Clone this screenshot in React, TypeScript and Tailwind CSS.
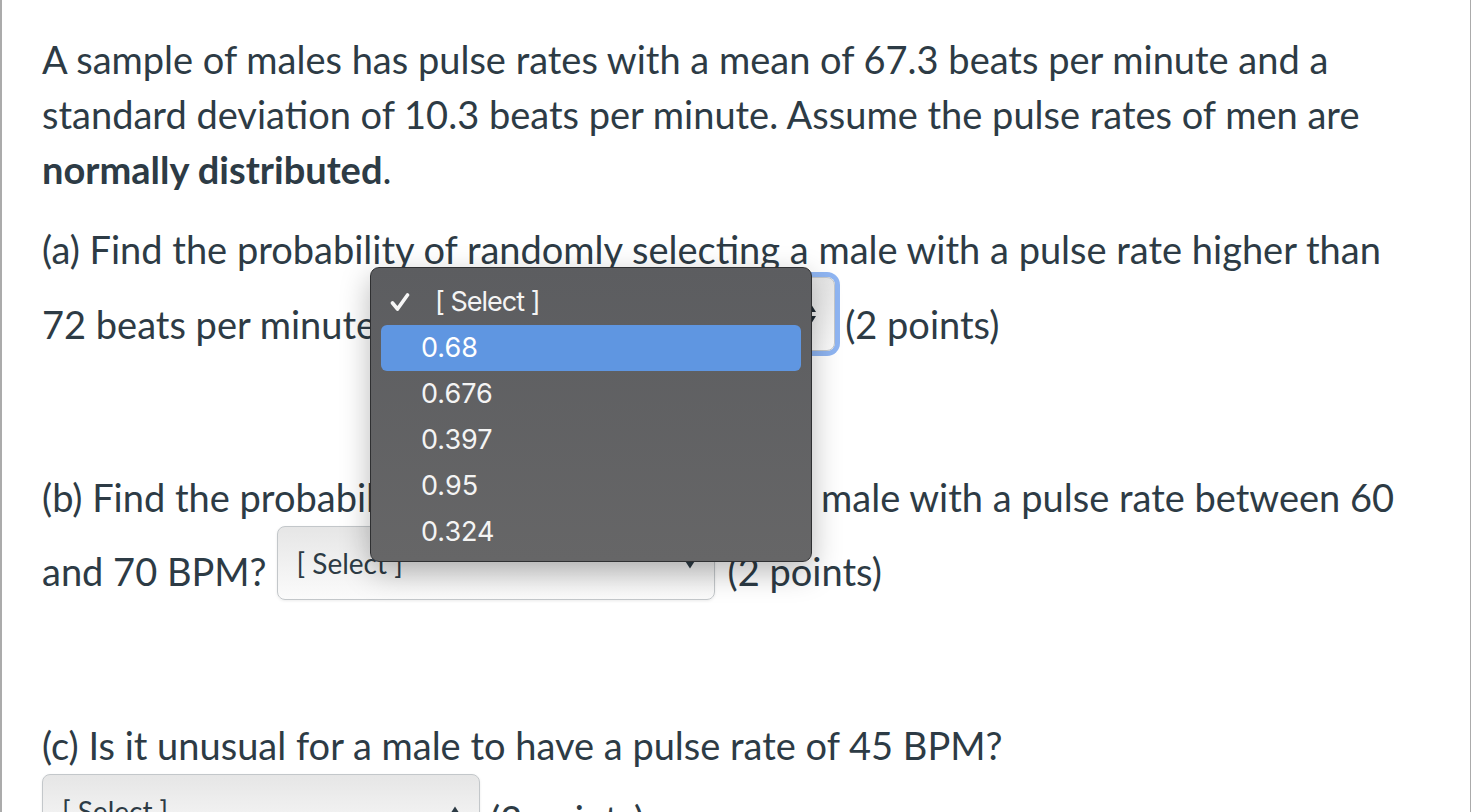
import React from "react";

function Arrow({ dir }: { dir: "down" | "up" | "both" }) {
  if (dir === "both") {
    return (
      <svg width="12" height="24" viewBox="0 0 12 24" className="shrink-0">
        <path d="M6 2 L11 10 L1 10 Z" fill="#1f2a33" />
        <path d="M6 22 L11 14 L1 14 Z" fill="#1f2a33" />
      </svg>
    );
  }
  return (
    <svg width="14" height="11" viewBox="0 0 14 11" className="shrink-0">
      {dir === "down" ? (
        <path d="M0.5 0.5 L13.5 0.5 L7 10.5 Z" fill="#2d3b45" />
      ) : (
        <path d="M0.5 10.5 L13.5 10.5 L7 0.5 Z" fill="#2d3b45" />
      )}
    </svg>
  );
}

function Select({ arrow, focused }: { arrow: "down" | "up" | "both"; focused?: boolean }) {
  return (
    <div
      className={
        "flex shrink-0 items-center justify-between w-[438px] h-[74px] rounded-[8px] border border-[#c3c7ca] bg-linear-to-b from-[#e6e6e6] to-[#fbfbfb] pl-[19px] pr-[17px] shadow-[0_1px_3px_rgba(0,0,0,0.08)] text-[28px] leading-none text-[#2d3b45] " +
        (focused ? "ring-[5px] ring-[#8fb5f2]" : "")
      }
    >
      <span>[ Select ]</span>
      <Arrow dir={arrow} />
    </div>
  );
}

function Check() {
  return (
    <svg width="20" height="20" viewBox="0 0 20 20" className="shrink-0">
      <path d="M2.5 11 L7.5 17 L17.5 3" fill="none" stroke="#f6f6f6" strokeWidth="3.6" strokeLinecap="round" strokeLinejoin="round" />
    </svg>
  );
}

export default function App() {
  const options = ["0.68", "0.676", "0.397", "0.95", "0.324"];
  return (
    <div
      className="relative w-[1471px] h-[812px] overflow-hidden bg-white border-l-2 border-r border-[#ababab]"
      style={{ fontFamily: "Lato, 'Noto Sans', sans-serif" }}
    >
      <div className="pl-[40px] pt-[32px] text-[38px] leading-[55px] text-[#2d3b45]">
        <p className="whitespace-nowrap">
          A sample of males has pulse rates with a mean of 67.3 beats per minute and a
          <br />
          standard deviation of 10.3 beats per minute. Assume the pulse rates of men are
          <br />
          <strong className="font-bold">normally distributed</strong>.
        </p>

        <div className="mt-[25px]">
          <p className="whitespace-nowrap">
            (a) Find the probability of randomly selecting a male with a pulse rate higher than
          </p>
          <div className="flex items-start h-[80px]">
            <span className="mt-[20px] whitespace-nowrap">72 beats per minute?</span>
            <div className="ml-[5px]">
              <Select arrow="both" focused />
            </div>
            <span className="mt-[20px] ml-[10px] whitespace-nowrap">(2 points)</span>
          </div>
        </div>

        <div className="mt-[113px]">
          <p className="whitespace-nowrap">
            (b) Find the probability of randomly selecting a male with a pulse rate between 60
          </p>
          <div className="flex items-start h-[76px]">
            <span className="mt-[19px] whitespace-nowrap">and 70 BPM?</span>
            <div className="ml-[10px] mt-[1px]">
              <Select arrow="down" />
            </div>
            <span className="mt-[19px] ml-[13px] whitespace-nowrap">(2 points)</span>
          </div>
        </div>

        <div className="mt-[117px]">
          <p className="whitespace-nowrap">(c) Is it unusual for a male to have a pulse rate of 45 BPM?</p>
          <div className="flex items-start mt-[1px]">
            <Select arrow="up" />
            <span className="mt-[18px] ml-[10px] whitespace-nowrap">(2 points)</span>
          </div>
        </div>
      </div>

      <div
        className="absolute left-[368px] top-[267px] w-[442px] h-[295px] rounded-[9px] border border-[#2f3032] bg-linear-to-b from-[#5c5d60] to-[#666667] shadow-[0_10px_30px_rgba(0,0,0,0.28)] px-[10px] pt-[11px] text-[27px] text-[#f4f4f4]"
        style={{ fontFamily: "Inter, 'Liberation Sans', sans-serif" }}
      >
        <div className="flex items-center h-[46px] pl-[9px]">
          <Check />
          <span className="ml-[25px] tracking-[-1px]">[ Select ]</span>
        </div>
        {options.map((o, i) => (
          <div
            key={o}
            className={
              "flex items-center h-[46px] pl-[40px] rounded-[6px] " +
              (i === 0 ? "bg-[#5f96e1] text-white" : "")
            }
          >
            {o}
          </div>
        ))}
      </div>
    </div>
  );
}
